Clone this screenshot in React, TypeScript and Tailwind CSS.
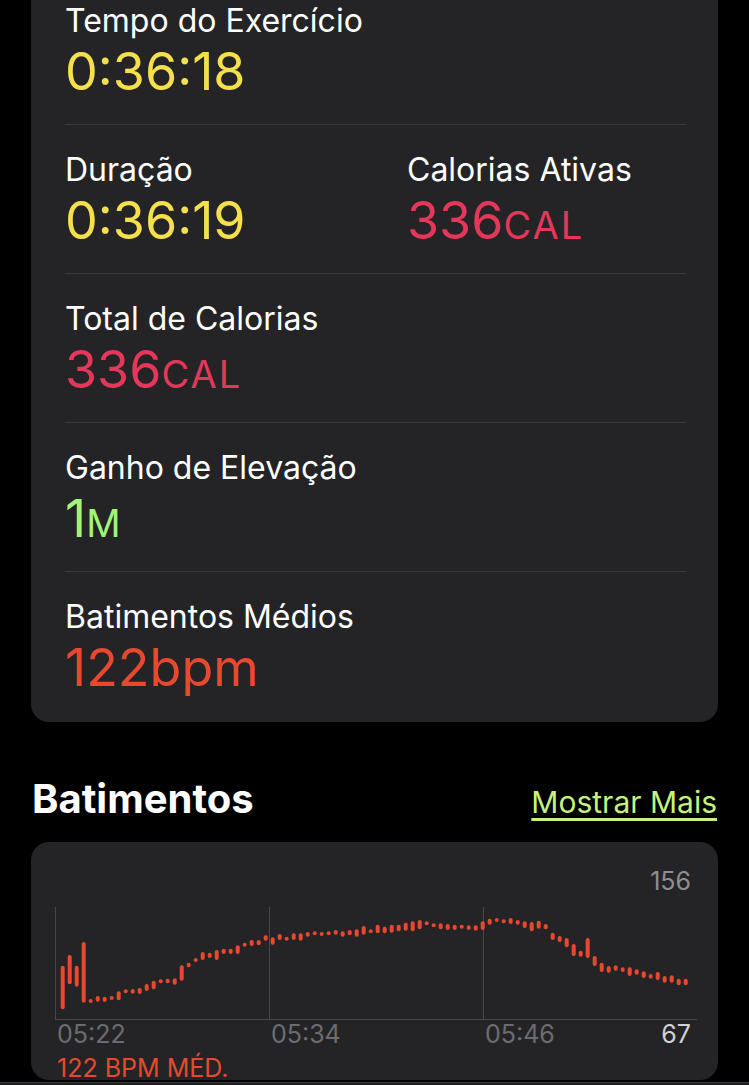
import { ReactNode } from 'react'

const Bars: [number, number][] = [
  [58.7, 102.3], [48, 77.3], [58.7, 79.7], [35, 95.7], [92, 94.7], [89, 94.7], [89.7, 95], [89, 92.3],
  [84.3, 93.3], [82.3, 86.3], [82, 86.7], [81, 87], [77, 84], [73.7, 82.3], [72.3, 75.7], [71.7, 76.3],
  [71.3, 77.7], [58.3, 73.7], [55.7, 60.3], [51, 55], [45, 53], [45.7, 51], [43, 53], [41.7, 47],
  [41.7, 47], [38.3, 47], [35.7, 39], [33, 39], [33, 38.3], [28.3, 33.7], [30.3, 37.7], [27, 33],
  [29.7, 33.7], [26.3, 33], [26.3, 33.7], [25, 29.7], [24.3, 28.3], [25, 28.3], [24.3, 28.3], [23, 27.7],
  [24.3, 29.7], [23, 28.3], [22.3, 29.7], [19, 27.7], [22.3, 26.3], [17.7, 26.3], [19.7, 26.3], [17.7, 25.7],
  [17.7, 24.3], [15.7, 23.7], [14.3, 24.3], [13, 22.3], [14.3, 17.7], [16.3, 19.7], [16.3, 22.3], [17, 23],
  [17.7, 23], [17.7, 21.7], [18.3, 23], [18.3, 23.7], [14.3, 23], [11.7, 17.7], [11, 14.3], [12.3, 16.3],
  [11, 17], [13, 17.7], [14.3, 21], [15, 24.3], [13.7, 21.7], [17, 22.3], [25.7, 33], [29, 35],
  [31, 40.3], [37, 49], [43.7, 49.7], [31, 51], [49, 59], [55.7, 65], [59, 65.7], [58.3, 63.7],
  [60.3, 65], [60.3, 69], [62.3, 67.7], [64.3, 71], [67, 71.7], [65, 73], [69, 75.7], [68.3, 75.7],
  [71.7, 78.3], [71.7, 78.3],
]

const Metric = ({ label, value }: { label: string; value: ReactNode }) => {
  return (
    <div className="flex flex-col pt-[26px]">
      <span className="text-[32px] leading-[38px] text-white">{label}</span>
      <span className="mt-[6px] text-[52px] leading-[52px]">{value}</span>
    </div>
  )
}

const Unit = ({ children }: { children: ReactNode }) => (
  <span className="text-[38px] tracking-[2px] uppercase">{children}</span>
)

const HeartChart = () => {
  return (
    <svg width="642" height="113" viewBox="0 0 642 113" className="block">
      <line x1="0.5" y1="0" x2="0.5" y2="113" stroke="#48484a" strokeWidth="1" />
      <line x1="214.5" y1="0" x2="214.5" y2="113" stroke="#48484a" strokeWidth="1" />
      <line x1="428.5" y1="0" x2="428.5" y2="113" stroke="#48484a" strokeWidth="1" />
      <line x1="0" y1="112.5" x2="642" y2="112.5" stroke="#48484a" strokeWidth="1" />
      {Bars.map(([top, bottom], i) => {
        const h = Math.max(bottom - top, 4)
        return (
          <rect
            key={i}
            x={7.7 + i * 7 - 2}
            y={top}
            width="4"
            height={h}
            rx="2"
            fill="#e8482f"
          />
        )
      })}
    </svg>
  )
}

export default function App() {
  return (
    <div className="h-[1085px] overflow-hidden bg-black font-['Inter',sans-serif]">
      <div className="mx-[31px] -mt-[24px] rounded-[18px] bg-[#242426] pl-[34px] pr-[32px]">
        <div className="h-[149px] border-b border-[#3a3a3c]">
          <Metric label="Tempo do Exercício" value={<span className="text-[#f4e04d]">0:36:18</span>} />
        </div>
        <div className="grid h-[149px] grid-cols-[342px_1fr] border-b border-[#3a3a3c]">
          <Metric label="Duração" value={<span className="text-[#f4e04d]">0:36:19</span>} />
          <Metric
            label="Calorias Ativas"
            value={
              <span className="text-[#e5375a]">
                336<Unit>cal</Unit>
              </span>
            }
          />
        </div>
        <div className="h-[149px] border-b border-[#3a3a3c]">
          <Metric
            label="Total de Calorias"
            value={
              <span className="text-[#e5375a]">
                336<Unit>cal</Unit>
              </span>
            }
          />
        </div>
        <div className="h-[149px] border-b border-[#3a3a3c]">
          <Metric
            label="Ganho de Elevação"
            value={
              <span className="text-[#a4f27a]">
                1<Unit>m</Unit>
              </span>
            }
          />
        </div>
        <div className="h-[150px]">
          <Metric label="Batimentos Médios" value={<span className="text-[#e8482f]">122bpm</span>} />
        </div>
      </div>

      <div className="mt-[53px] flex items-baseline justify-between px-[32px]">
        <h2 className="text-[40px] leading-[48px] font-bold text-white">Batimentos</h2>
        <a className="text-[30px] leading-[36px] text-[#c5f27f] underline underline-offset-[5px]">
          Mostrar Mais
        </a>
      </div>

      <div className="mx-[31px] mt-[19px] rounded-[18px] bg-[#242426] pt-[27px] pl-[24px] pr-[20px]">
        <div className="pr-[7px] text-right text-[25px] leading-[24px] text-[#8e8e93]">156</div>
        <div className="mt-[14px]">
          <HeartChart />
        </div>
        <div className="mt-[2px] grid grid-cols-[214px_214px_1fr] pl-[2px] pr-[7px] text-[25px] leading-[24px] text-[#6c6c70]">
          <span>05:22</span>
          <span>05:34</span>
          <div className="flex justify-between">
            <span>05:46</span>
            <span className="text-[#d1d1d6]">67</span>
          </div>
        </div>
        <div className="mt-[10px] pl-[2px] text-[25px] leading-[24px] text-[#e8482f]">122 BPM MÉD.</div>
      </div>

      <div className="fixed inset-x-0 bottom-0 h-[3px] border-t border-[#3a3a3c] bg-[#1c1c1e]" />
    </div>
  )
}
